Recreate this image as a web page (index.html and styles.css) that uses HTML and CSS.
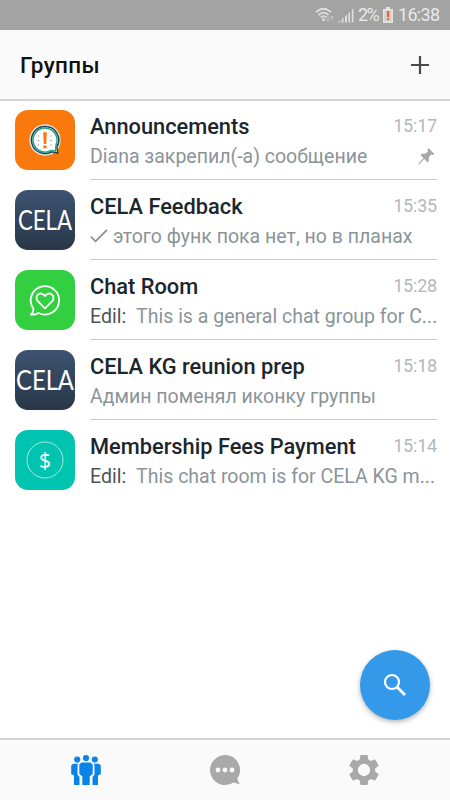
FILE: index.html
```html
<!doctype html>
<html lang="ru">
	<head>
		<meta charset="UTF-8">
		<meta name="viewport" content="width=device-width, initial-scale=1.0">
		<title>Группы</title>
		<link rel="stylesheet" href="styles.css">
	</head>

	<body>

		<div class="status">
			<svg class="wifi" width="20" height="16" viewBox="0 0 20 16">
				<g fill="none" stroke="#dedede" stroke-width="1.8">
					<path d="M1 5.200Q8.500-1.800 16 5.200"/>
					<path d="M3.500 8Q8.500 3.200 13.500 8"/>
					<path d="M5.700 10.500Q8.500 7.800 11.300 10.500"/>
				</g>
				<circle cx="8.500" cy="12.500" r="1.500" fill="#dedede"/>
				<path d="M13 9v5M11.300 12.500l1.700 1.800 1.700-1.800M17 14V9M15.300 10.800L17 9l1.700 1.800" fill="none" stroke="#c4c4c4" stroke-width="1"/>
			</svg>
			<svg class="signal" width="16" height="16" viewBox="0 0 16 16">
				<path d="M0 15.500h2v-2zM3.500 12.500l2-2v5h-2zM7 9.500l2-2v8H7zM10.300 6.500l1.700-1.500v10.500h-1.700zM13.800 3l1.700-1.500v14h-1.700z" fill="#dedede"/>
			</svg>
			<span class="percent">2%</span>
			<svg class="battery" width="10" height="16" viewBox="0 0 10 16">
				<path d="M3 0h4v2h3v14H0V2h3z" fill="#e4e4e4"/>
				<path d="M1.500 3.500h7v11h-7z" fill="#cfcfcf"/>
				<path d="M4.200 4h1.800v6H4.200zM4.200 11.300h1.800v1.800H4.200z" fill="#f4511e"/>
			</svg>
			<span class="clock">16:38</span>
		</div>

		<header>
			<h1>Группы</h1>
			<svg width="18" height="18" viewBox="0 0 18 18">
				<path d="M9 0v18M0 9h18" stroke="#4a4a4a" stroke-width="2.200"/>
			</svg>
		</header>

		<main>
			<div class="chat">
				<div class="icon orange">
					<svg width="60" height="60" viewBox="0 0 60 60">
						<circle cx="30" cy="30" r="15.700" fill="#dfe5e8"/>
						<path d="M30 16.500a13.500 13.500 0 1 0 6.500 25.300l6.300 1.200-1-6A13.500 13.500 0 0 0 30 16.500z" fill="#fff" stroke="#1d4658" stroke-width="1.500"/>
						<path d="M41 35a12 12 0 1 0-5 5.500l4.500.5z" fill="#fff" stroke="#2ba184" stroke-width="1.500"/>
						<path d="M23.500 25.500v10M36 25.500v10" stroke="#506c7d" stroke-width="1" stroke-dasharray="1 3.500"/>
						<path d="M28.200 22.200h3.600l-.5 11.800h-2.600zM28.300 35.500h3.400v2.800h-3.400z" fill="#f9790d"/>
					</svg>
				</div>
				<div class="info">
					<div class="line"><h2>Announcements</h2><time>15:17</time></div>
					<div class="line">
						<p>Diana закрепил(-а) сообщение</p>
						<svg class="pin" width="17" height="17" viewBox="0 0 17 17">
							<path d="M10.500 0l6 6.200-1.700.8-1.700-.5-2.400 3 .2 3.500-1.300 1.500-3.300-3.400L1 16.500l-.8-.6L5.500 10 2.300 7l1.500-1.300 3.300.1L10 3.400l-.6-1.900z" fill="#a9a9a9"/>
						</svg>
					</div>
				</div>
			</div>

			<div class="chat">
				<div class="icon navy">
					<svg width="60" height="60" viewBox="0 0 60 60">
						<text class="logo" x="3" y="40" textLength="54" lengthAdjust="spacingAndGlyphs">CELA</text>
					</svg>
				</div>
				<div class="info">
					<div class="line"><h2>CELA Feedback</h2><time>15:35</time></div>
					<div class="line">
						<svg class="check" width="18" height="14" viewBox="0 0 18 14">
							<path d="M.8 7.500l4.700 4.800L17 .8" fill="none" stroke="#848d92" stroke-width="1.700"/>
						</svg>
						<p>этого функ пока нет, но в планах</p>
					</div>
				</div>
			</div>

			<div class="chat">
				<div class="icon green">
					<svg width="60" height="60" viewBox="0 0 60 60">
						<g fill="none" stroke="#fff" stroke-width="1.800" stroke-linejoin="round">
							<path d="M18.300 38.500A14.200 14.200 0 1 1 23.500 43C21 44.600 18.500 45 15.800 44.500 18 43 18.800 41 18.300 38.500z"/>
							<path d="M30 38.300l-7-7c-4.800-5.300 3-11.300 7-5.300 4-6 11.800 0 7 5.300z"/>
						</g>
					</svg>
				</div>
				<div class="info">
					<div class="line"><h2>Chat Room</h2><time>15:28</time></div>
					<div class="line"><p><span class="from">Edil:</span>This is a general chat group for C...</p></div>
				</div>
			</div>

			<div class="chat">
				<div class="icon navy">
					<svg width="60" height="60" viewBox="0 0 60 60">
						<text class="logo" x="1" y="40" textLength="58" lengthAdjust="spacingAndGlyphs">CELA</text>
					</svg>
				</div>
				<div class="info">
					<div class="line"><h2>CELA KG reunion prep</h2><time>15:18</time></div>
					<div class="line"><p>Админ поменял иконку группы</p></div>
				</div>
			</div>

			<div class="chat">
				<div class="icon teal">
					<svg width="60" height="60" viewBox="0 0 60 60">
						<circle cx="30" cy="30" r="18" fill="none" stroke="#a5e8df" stroke-width="1"/>
						<text class="dollar" x="30" y="37.500" text-anchor="middle">$</text>
					</svg>
				</div>
				<div class="info last">
					<div class="line"><h2>Membership Fees Payment</h2><time>15:14</time></div>
					<div class="line"><p><span class="from">Edil:</span>This chat room is for CELA KG m...</p></div>
				</div>
			</div>

			<button type="button" class="search" aria-label="Поиск">
				<svg width="24" height="24" viewBox="0 0 24 24">
					<circle cx="9" cy="9" r="7" fill="none" stroke="#fff" stroke-width="2.200"/>
					<path d="M14 14l8 8" stroke="#fff" stroke-width="2.800"/>
				</svg>
			</button>
		</main>

		<nav>
			<svg width="32" height="32" viewBox="0 0 32 32">
				<g fill="#0b84ea">
					<circle cx="7.200" cy="5.500" r="3.100"/>
					<circle cx="24.800" cy="5.500" r="3.100"/>
					<circle cx="16" cy="4" r="3.100"/>
					<path d="M3 9.800h5.200L7.500 11v9.500l2 2.500v8H4v-9.500L1.200 20v-8.500zM29 9.800h-5.200l.7 1.200v9.500l-2 2.500v8H28v-9.500l2.800-1.500v-8.500z"/>
					<path d="M11.500 8.500h9l2.200 2V20l-3 2.300V31h-7.400v-8.700l-3-2.300v-9.500z"/>
				</g>
			</svg>
			<svg class="bubble" width="32" height="32" viewBox="0 0 32 32">
				<path d="M16 1a15 15 0 1 0 8.500 27.400l6.200 1.800-2.500-5.500A15 15 0 0 0 16 1z" fill="#a9a9a9"/>
				<g fill="#fafafa">
					<circle cx="9" cy="16" r="2.400"/>
					<circle cx="16" cy="16" r="2.400"/>
					<circle cx="23" cy="16" r="2.400"/>
				</g>
			</svg>
			<svg width="36" height="36" viewBox="0 0 24 24">
				<path d="M19.430 12.980c.04-.32.07-.64.07-.98s-.03-.66-.07-.98l2.110-1.650c.19-.15.24-.42.12-.64l-2-3.460c-.12-.22-.39-.3-.61-.22l-2.490 1c-.52-.4-1.080-.73-1.690-.98l-.38-2.650C14.460 2.180 14.250 2 14 2h-4c-.25 0-.46.18-.49.42l-.38 2.650c-.61.25-1.170.59-1.690.98l-2.490-1c-.23-.09-.49 0-.61.22l-2 3.460c-.13.22-.07.49.12.64l2.110 1.650c-.04.32-.07.65-.07.98s.03.66.07.98l-2.110 1.650c-.19.15-.24.42-.12.64l2 3.460c.12.22.39.3.61.22l2.490-1c.52.4 1.080.73 1.690.98l.38 2.650c.03.24.24.42.49.42h4c.25 0 .46-.18.49-.42l.38-2.650c.61-.25 1.170-.59 1.690-.98l2.490 1c.23.09.49 0 .61-.22l2-3.460c.12-.22.07-.49-.12-.64l-2.110-1.650zM12 16.100a4.100 4.100 0 1 1 0-8.200 4.100 4.100 0 0 1 0 8.200z" fill="#a9a9a9"/>
			</svg>
		</nav>

	</body>
</html>
```

FILE: styles.css
```css
*{
	box-sizing: border-box;
}

body{
	margin: 0;
	height: 100vh;
	display: flex;
	flex-direction: column;
	overflow: hidden;
	background-color: #fff;
	font-family: Roboto, "Liberation Sans", sans-serif;
}

h1, h2, p{
	margin: 0;
}

svg{
	display: block;
	flex: none;
}

.status{
	height: 30px;
	display: flex;
	align-items: center;
	padding: 0 10px 0 315px;
	background-color: #a3a3a3;
	color: #e8e8e8;
	font-size: 18px;
	line-height: 30px;
	white-space: nowrap;
}

.signal{
	margin-left: 3px;
}

.percent{
	width: 21px;
	margin-left: 4px;
	letter-spacing: -1.5px;
}

.battery{
	margin-left: 4px;
}

.clock{
	margin-left: 5px;
	letter-spacing: -0.7px;
}

header{
	height: 71px;
	display: flex;
	align-items: center;
	justify-content: space-between;
	padding: 0 21px 0 20px;
	background-color: #fafafa;
	border-bottom: 2px solid #d6d6d6;
}

h1{
	font-size: 22.5px;
	font-weight: 500;
	letter-spacing: 0.35px;
	color: #111;
}

main{
	flex: 1;
	position: relative;
}

.chat{
	display: flex;
	height: 80px;
	padding: 0 13px 0 15px;
}

.icon{
	width: 60px;
	height: 60px;
	margin: 9px 15px 0 0;
	border-radius: 13px;
	flex: none;
}

.orange{
	background-color: #f9790d;
}

.navy{
	background: linear-gradient(#3c5371, #293748);
}

.green{
	background-color: #32cf40;
}

.teal{
	background-color: #00c4b0;
}

.logo{
	font-family: Lato, sans-serif;
	font-size: 27px;
	fill: #fff;
}

.dollar{
	font-family: "Open Sans", sans-serif;
	font-size: 21px;
	fill: #fff;
}

.info{
	flex: 1;
	min-width: 0;
	height: 79px;
	padding-top: 10px;
	border-bottom: 1px solid #c8c8c8;
}

.last{
	border: 0;
}

.line{
	display: flex;
	align-items: center;
	height: 30px;
	white-space: nowrap;
}

h2{
	flex: 1;
	padding-top: 1px;
	font-size: 21.8px;
	font-weight: 500;
	line-height: 26px;
	color: #1c262c;
}

time{
	padding-bottom: 1px;
	font-size: 18px;
	letter-spacing: -0.2px;
	color: #b2b8bb;
}

p{
	flex: 1;
	min-width: 0;
	padding-top: 1px;
	font-size: 19.5px;
	line-height: 28px;
	color: #8b9498;
}

.from{
	margin-right: 10px;
	color: #4b5357;
}

.pin{
	margin: 0 2px 0 0;
}

.check{
	margin-right: 5px;
}

.search{
	position: absolute;
	right: 20px;
	bottom: 18px;
	width: 70px;
	height: 70px;
	padding: 0;
	border: 0;
	border-radius: 50%;
	display: flex;
	align-items: center;
	justify-content: center;
	background-color: #3399e8;
	box-shadow: 0 2px 5px rgba(0, 0, 0, 0.3);
}

nav{
	height: 62px;
	display: flex;
	align-items: center;
	justify-content: space-between;
	padding: 0 68px 0 70px;
	background-color: #fafafa;
	border-top: 2px solid #d4d4d4;
}

.bubble{
	margin-left: 2px;
}
```
